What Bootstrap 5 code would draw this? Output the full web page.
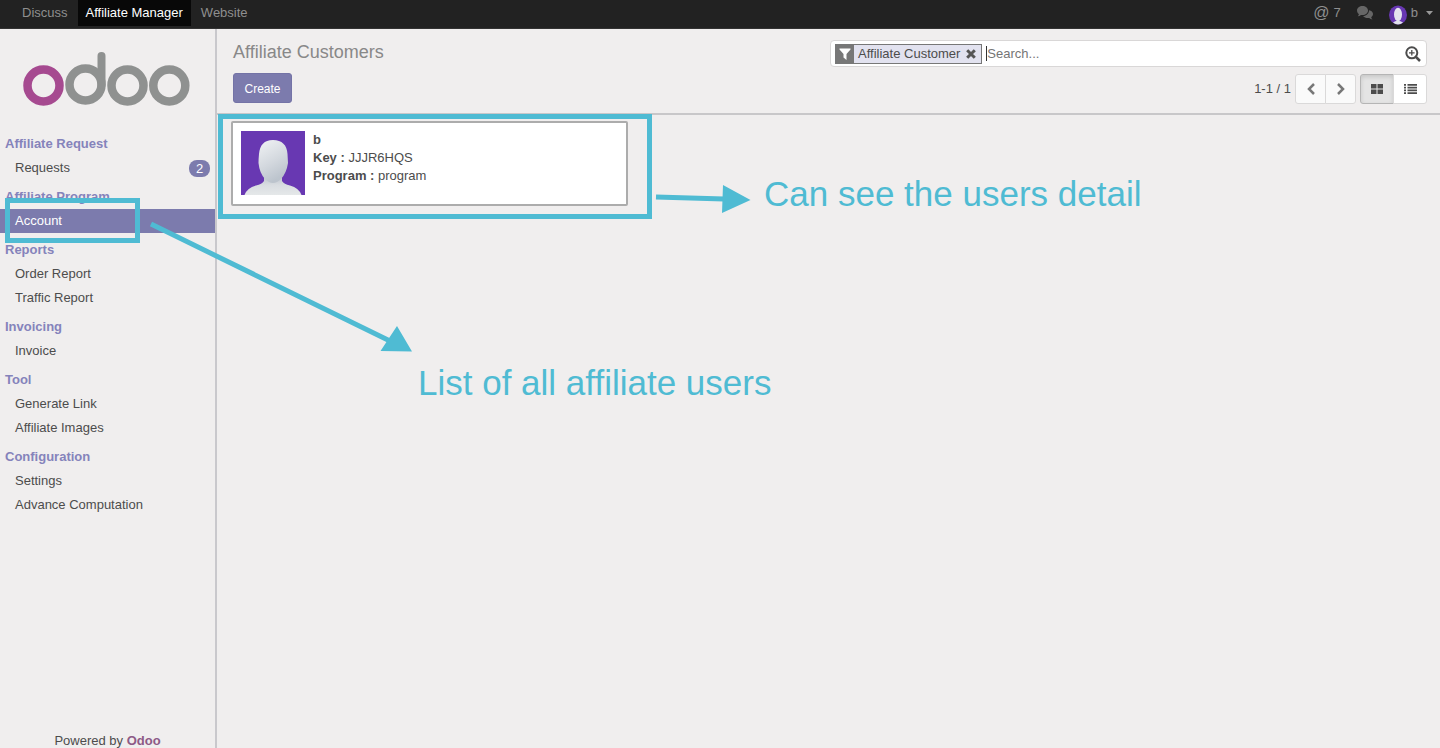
<!DOCTYPE html>
<html lang="en">
<head>
<meta charset="utf-8">
<meta name="viewport" content="width=device-width, initial-scale=1">
<title>Affiliate Customers - Odoo</title>
<link href="https://cdn.jsdelivr.net/npm/bootstrap@5.3.0/dist/css/bootstrap.min.css" rel="stylesheet">
<style>
  :root { --brand: #7c7bad; --note: #4fbbd3; }
  body { font-family: "Liberation Sans", Arial, sans-serif; font-size: 13px; line-height: 18px; color: #4c4c4c; background: #f0eeee; }
  a { text-decoration: none; color: inherit; }
  .topbar { height: 29px; background: #222; color: #8f8f8f; border-bottom: 1px solid #333; }
  .topbar a { height: 26px; line-height: 26px; padding: 0 8px; }
  .topbar a.current { background: #080808; color: #fff; }
  .app-links { padding-left: 14px; gap: 2px; }
  .topbar .user-tools { padding-right: 7px; gap: 16px; }
  .topbar .user-tools a { padding: 0; }
  .side { width: 217px; border-right: 2px solid #c9c8cc; }
  .brand-logo { padding: 22px 0 0 22px; height: 103px; }
  .side h2 { font-size: 13px; line-height: 24px; margin: 5px 0 0; padding-left: 5px; font-weight: bold; color: #8583bb; }
  .side h2:first-child { margin-top: 0; }
  .side li a { height: 24px; line-height: 24px; padding: 0 5px 0 15px; }
  .side li a.current { background: var(--brand); color: #fff; }
  .count { background: var(--brand); color: #fff; border-radius: 8px; width: 21px; line-height: 17px; text-align: center; }
  .powered { line-height: 14px; }
  .powered b { color: #8d5a86; }
  .control { height: 86px; border-bottom: 2px solid #c8c7c9; padding: 11px 13px 0 16px; }
  .control h1 { font-size: 18px; line-height: 24px; margin: 0 0 9px; color: #888; }
  .btn-create { background: var(--brand); color: #fff; border: 1px solid #7473a6; border-radius: 3px; font-size: 12px; line-height: 18px; padding: 6px 10px 4px; width: 59px; height: 30px; }
  .searchbox { height: 27px; background: #fff; border: 1px solid #d9d7d7; border-radius: 4px; padding: 0 5px 0 4px; margin-bottom: 7px; }
  .facet { height: 20px; border: 1px solid #777; background: #e2e2ef; }
  .facet-icon { background: #777; width: 18px; height: 18px; }
  .facet button { padding: 0; width: 21px; }
  .search-caret { width: 1px; height: 15px; background: #333; margin-left: 4px; }
  .searchbox input { border: 0; outline: 0; padding: 0; min-width: 0; color: #4c4c4c; background: transparent; }
  .searchbox input::placeholder { color: #757575; opacity: 1; }
  .btn-tool { background: #fafafa; border: 1px solid #dad9d9; width: 31px; height: 30px; padding: 0; color: #777; line-height: 1; border-radius: 3px; }
  .btn-tool svg { display: block; margin: auto; }
  .btn-view { width: 34px; color: #4c4c4c; background: #fff; }
  .btn-view.pressed { background: #e4e4e4; border-color: #b5b5b5; box-shadow: inset 0 2px 4px rgba(0,0,0,.13); }
  .kanban { padding: 6px 14px; }
  .record { width: 397px; height: 85px; background: #fff; border: 2px solid #acacac; border-radius: 2px; padding: 8px; gap: 8px; }
  .note-layer { z-index: 5; pointer-events: none; }
  .note-frame { border: 5px solid var(--note); }
  .frame-account { left: 5px; top: 198px; width: 135px; height: 45px; }
  .frame-record { left: 218px; top: 114px; width: 434px; height: 105px; }
  .note-text { color: var(--note); font-size: 35px; line-height: 40px; white-space: nowrap; }
  .text-detail { left: 764px; top: 174px; }
  .text-list { left: 418px; top: 363px; }
</style>
</head>
<body class="min-vh-100 d-flex flex-column position-relative">
<nav class="topbar d-flex justify-content-between" aria-label="Applications">
  <div class="app-links d-flex">
    <a href="#">Discuss</a>
    <a href="#" class="current">Affiliate Manager</a>
    <a href="#">Website</a>
  </div>
  <div class="user-tools d-flex">
    <a href="#" class="d-flex gap-1"><span class="fs-6">@</span><span>7</span></a>
    <a href="#" class="d-flex align-items-center" aria-label="Messages">
      <svg width="16" height="14" viewBox="0 0 16 14" fill="#666"><path d="M11 4.5C11 7 8.600 9 5.500 9L4 8.900Q2.500 10.200.7 10.300Q1.800 9.300 1.900 8.100C.7 7.300 0 6 0 4.500C0 2 2.500 0 5.500 0S11 2 11 4.500Z"/><path d="M12 4.200C14.500 4.500 16 6 16 8C16 9.400 15.300 10.500 14.200 11.200Q14.400 12.500 15.500 13.500Q13.500 13.400 12.200 12L11 12.100C8.800 12.100 7 11.300 6 10C9.500 9.800 12 7.500 12 4.200Z"/></svg>
    </a>
    <a href="#" class="d-flex align-items-center">
      <svg class="me-1 mt-1" width="18" height="20" viewBox="0 0 18 20"><ellipse cx="9" cy="10" rx="9" ry="9.500" fill="#6838b2"/><ellipse cx="9" cy="9.500" rx="4" ry="6.700" fill="#e4e5ee"/><path d="M4 17.500Q6.500 15.500 9 15.800T14 17.500Q9 21.500 4 17.500Z" fill="#e0e1ea"/></svg>
      b
      <svg class="ms-2" width="7" height="4" viewBox="0 0 7 4" fill="#999"><path d="M0 0H7L3.500 4Z"/></svg>
    </a>
  </div>
</nav>

<div class="d-flex flex-grow-1">
  <aside class="side d-flex flex-column flex-shrink-0">
    <div class="brand-logo">
      <svg width="169" height="56" viewBox="0 0 169 56" fill="none" stroke-width="8.500" role="img" aria-label="odoo"><g stroke="#8f9190"><circle cx="63.500" cy="33.500" r="16"/><path d="M79.500 34V5" stroke-linecap="round" stroke-width="8"/><circle cx="105.500" cy="34.500" r="16"/><circle cx="147.300" cy="34.500" r="16"/></g><circle cx="21.500" cy="34.500" r="16" stroke="#a64a90"/></svg>
    </div>
    <div>
      <h2>Affiliate Request</h2>
      <ul class="list-unstyled m-0"><li><a class="d-flex align-items-center justify-content-between" href="#">Requests <span class="count">2</span></a></li></ul>
      <h2>Affiliate Program</h2>
      <ul class="list-unstyled m-0"><li><a class="d-block current" href="#">Account</a></li></ul>
      <h2>Reports</h2>
      <ul class="list-unstyled m-0"><li><a class="d-block" href="#">Order Report</a></li><li><a class="d-block" href="#">Traffic Report</a></li></ul>
      <h2>Invoicing</h2>
      <ul class="list-unstyled m-0"><li><a class="d-block" href="#">Invoice</a></li></ul>
      <h2>Tool</h2>
      <ul class="list-unstyled m-0"><li><a class="d-block" href="#">Generate Link</a></li><li><a class="d-block" href="#">Affiliate Images</a></li></ul>
      <h2>Configuration</h2>
      <ul class="list-unstyled m-0"><li><a class="d-block" href="#">Settings</a></li><li><a class="d-block" href="#">Advance Computation</a></li></ul>
    </div>
    <div class="powered mt-auto text-center">Powered by <a href="#"><b>Odoo</b></a></div>
  </aside>

  <main class="flex-grow-1">
    <header class="control d-flex">
      <div class="w-50">
        <h1>Affiliate Customers</h1>
        <button type="button" class="btn-create">Create</button>
      </div>
      <div class="w-50">
        <div class="searchbox d-flex align-items-center">
          <div class="facet d-flex align-items-center">
            <span class="facet-icon d-flex align-items-center justify-content-center me-1"><svg width="12" height="12" viewBox="0 0 12 12" fill="#fff"><path d="M.5.500H11.500V1.500L7.500 6V12L4.500 9.500V6L.5 1.500Z"/></svg></span>
            <span>Affiliate Customer</span>
            <button type="button" class="btn border-0 d-flex align-items-center justify-content-center" aria-label="Remove filter"><svg width="10" height="10" viewBox="0 0 10 10" stroke="#555" stroke-width="3"><path d="M1.200 1.200L8.800 8.800M8.800 1.200L1.200 8.800"/></svg></button>
          </div>
          <span class="search-caret"></span>
          <input class="flex-grow-1" type="text" placeholder="Search..." aria-label="Search">
          <button type="button" class="btn border-0 p-0 d-flex" aria-label="Advanced search"><svg width="16" height="16" viewBox="0 0 16 16" fill="none" stroke="#4c4c4c"><circle cx="6.800" cy="6.800" r="5.500" stroke-width="2"/><path d="M11 11L15 15" stroke-width="2.500"/><path d="M4 6.800H9.600M6.800 4V9.600" stroke-width="1.300"/></svg></button>
        </div>
        <div class="d-flex justify-content-end align-items-center">
          <span class="me-1">1-1 / 1</span>
          <div class="btn-group me-1">
            <button type="button" class="btn btn-tool" aria-label="Previous"><svg width="8" height="12" viewBox="0 0 8 12" fill="none" stroke="#777" stroke-width="2.500"><path d="M7 1L2 6L7 11"/></svg></button>
            <button type="button" class="btn btn-tool" aria-label="Next"><svg width="8" height="12" viewBox="0 0 8 12" fill="none" stroke="#777" stroke-width="2.500"><path d="M1 1L6 6L1 11"/></svg></button>
          </div>
          <div class="btn-group">
            <button type="button" class="btn btn-tool btn-view pressed" aria-label="Kanban"><svg width="12" height="10" viewBox="0 0 12 10" fill="#4c4c4c"><path d="M0 0H5.500V4.500H0ZM6.500 0H12V4.500H6.500ZM0 5.500H5.500V10H0ZM6.500 5.500H12V10H6.500Z"/></svg></button>
            <button type="button" class="btn btn-tool btn-view" aria-label="List"><svg width="13" height="10" viewBox="0 0 13 10" fill="#4c4c4c"><path d="M0 0H2V1.700H0ZM3.500 0H13V1.700H3.500ZM0 2.800H2V4.500H0ZM3.500 2.800H13V4.500H3.500ZM0 5.600H2V7.300H0ZM3.500 5.600H13V7.300H3.500ZM0 8.300H2V10H0ZM3.500 8.300H13V10H3.500Z"/></svg></button>
          </div>
        </div>
      </div>
    </header>
    <section class="kanban">
      <article class="record d-flex">
        <svg class="flex-shrink-0" width="64" height="64" viewBox="0 0 64 64" role="img" aria-label="b">
          <defs>
            <linearGradient id="face" x1="0" y1="0" x2="0.400" y2="1"><stop offset="0" stop-color="#f1f3f5"/><stop offset="0.600" stop-color="#d3d8de"/><stop offset="1" stop-color="#bcc4cd"/></linearGradient>
            <linearGradient id="bust" x1="0" y1="0" x2="0" y2="1"><stop offset="0" stop-color="#b9c0ca"/><stop offset="0.500" stop-color="#d9dde1"/><stop offset="1" stop-color="#e5e8e9"/></linearGradient>
          </defs>
          <rect width="64" height="64" fill="#6838b2"/>
          <path d="M23 44H41V50Q43 53 49 54.500Q58 57 60.500 64H3.500Q6 57 15 54.500Q21 53 23 50Z" fill="url(#bust)"/>
          <path d="M32 9C41 9 46 14 46.500 23Q46.800 28 47 32Q45.500 42 40 48Q36 52 32 52T24 48Q18.500 42 17.500 32Q17.500 28 18 23C19 14 23 9 32 9Z" fill="url(#face)"/>
        </svg>
        <div><b>b</b><br><b>Key :</b> JJJR6HQS<br><b>Program :</b> program</div>
      </article>
    </section>
  </main>
</div>

<!-- Annotations drawn over the application -->
<div class="note-layer position-absolute top-0 start-0">
  <div class="note-frame frame-account position-absolute"></div>
  <div class="note-frame frame-record position-absolute"></div>
  <svg class="position-absolute top-0 start-0" width="760" height="360" viewBox="0 0 760 360" fill="#4fbbd3" stroke="#4fbbd3" stroke-width="5" aria-hidden="true"><path d="M151 224L390 341M656 197L724 199"/><path stroke="none" d="M397 326L412 351.500L380.500 351ZM723 185L750.500 200L722 213Z"/></svg>
  <div class="note-text text-detail position-absolute">Can see the users detail</div>
  <div class="note-text text-list position-absolute">List of all affiliate users</div>
</div>
<script src="https://cdn.jsdelivr.net/npm/bootstrap@5.3.0/dist/js/bootstrap.bundle.min.js"></script>
</body>
</html>
